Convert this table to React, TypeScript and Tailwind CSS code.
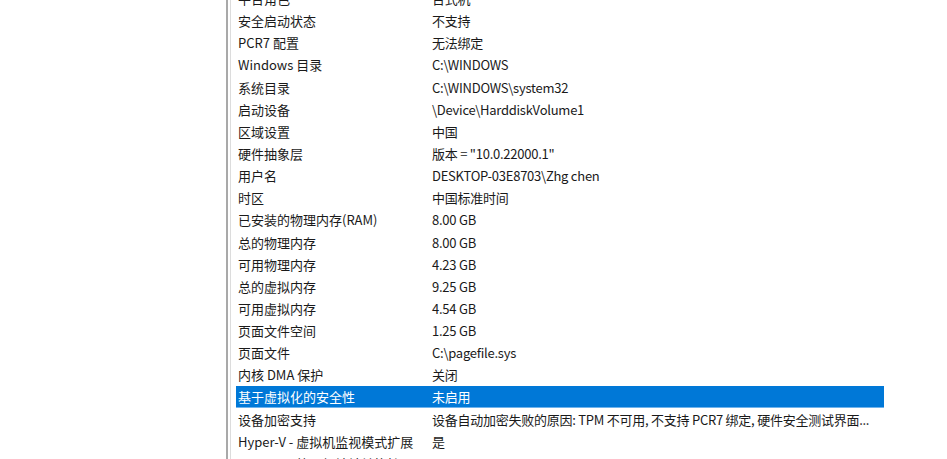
const rows: [string, string][] = [
  ["平台角色", "台式机"],
  ["安全启动状态", "不支持"],
  ["PCR7 配置", "无法绑定"],
  ["Windows 目录", "C:\\WINDOWS"],
  ["系统目录", "C:\\WINDOWS\\system32"],
  ["启动设备", "\\Device\\HarddiskVolume1"],
  ["区域设置", "中国"],
  ["硬件抽象层", "版本 = \"10.0.22000.1\""],
  ["用户名", "DESKTOP-03E8703\\Zhg chen"],
  ["时区", "中国标准时间"],
  ["已安装的物理内存(RAM)", "8.00 GB"],
  ["总的物理内存", "8.00 GB"],
  ["可用物理内存", "4.23 GB"],
  ["总的虚拟内存", "9.25 GB"],
  ["可用虚拟内存", "4.54 GB"],
  ["页面文件空间", "1.25 GB"],
  ["页面文件", "C:\\pagefile.sys"],
  ["内核 DMA 保护", "关闭"],
  ["基于虚拟化的安全性", "未启用"],
  ["设备加密支持", "设备自动加密失败的原因: TPM 不可用, 不支持 PCR7 绑定, 硬件安全测试界面..."],
  ["Hyper-V - 虚拟机监视模式扩展", "是"],
  ["Hyper-V - 第二级地址转换扩展", "是"],
]

const SELECTED = 18

export default function App() {
  return (
    <div
      className="flex h-[459px] w-[947px] overflow-hidden bg-white text-[13px] text-[#1a1a1a]"
      style={{ fontFamily: '"Noto Sans CJK SC", "Noto Sans", sans-serif' }}
    >
      <div className="w-[226px] shrink-0 bg-white" />
      <div className="w-[2px] shrink-0 bg-[#a9a9a9]" />
      <div className="w-[2px] shrink-0 bg-white" />
      <div className="w-px shrink-0 bg-[#dcdcdc]" />
      <div className="flex-1 pl-[5px]">
        <div className="mt-[-12.5px] w-[648px]">
          {rows.map(([label, value], i) => (
            <div
              key={label}
              className={
                i === SELECTED
                  ? "flex h-[22.15px] items-center whitespace-nowrap border-b border-[#6fb3ec] bg-[#0078d7] pl-[2px] leading-none text-white"
                  : "flex h-[22.15px] items-center whitespace-nowrap pl-[2px] leading-none"
              }
            >
              <span className="w-[194px] shrink-0">{label}</span>
              <span className="tracking-[-0.25px]">{value}</span>
            </div>
          ))}
        </div>
      </div>
    </div>
  )
}
